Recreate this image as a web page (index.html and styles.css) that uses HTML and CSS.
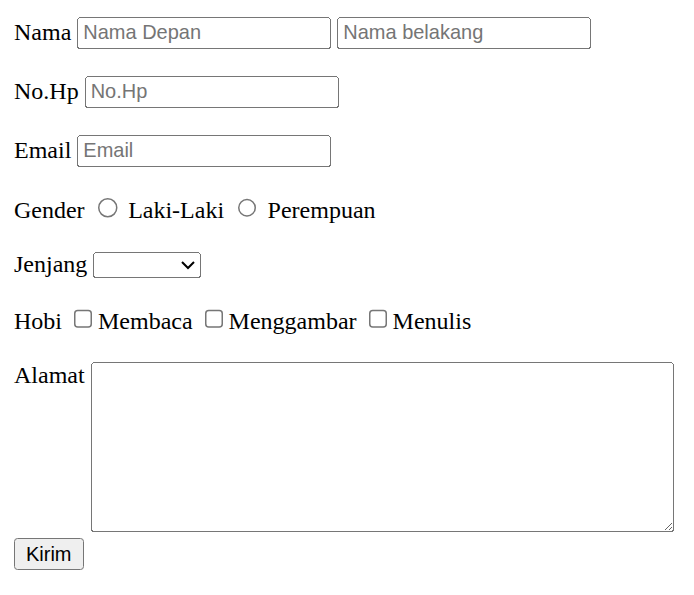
FILE: index.html
```html
<!DOCTYPE html>
<html>
<head>
<meta charset="utf-8">
<link rel="stylesheet" href="styles.css">
</head>
<body>
<form class="page">
  <div class="row">Nama <input class="field" type="text" placeholder="Nama Depan"> <input class="field" type="text" placeholder="Nama belakang"></div>
  <div class="row">No.Hp <input class="field" type="text" placeholder="No.Hp"></div>
  <div class="row">Email <input class="field" type="email" placeholder="Email"></div>
  <div class="row">Gender <input class="opt" type="radio" name="g"> Laki-Laki <input class="opt" type="radio" name="g"> Perempuan</div>
  <div class="row">Jenjang <select class="pick"><option></option><option>SD</option><option>SMP</option><option>SMA</option></select></div>
  <div class="row">Hobi <input class="opt" type="checkbox">Membaca <input class="opt" type="checkbox">Menggambar <input class="opt" type="checkbox">Menulis</div>
  <div class="row-last">Alamat <textarea class="area"></textarea></div>
  <button class="btn" type="button">Kirim</button>
</form>
</body>
</html>
```

FILE: styles.css
```css
body {
  margin: 0;
}
.page {
  zoom: 1.5;
  margin: 11.33px 8px 8px 9.33px;
  font-family: "Liberation Serif", serif;
  font-size: 16px;
  color: #000;
}
.row {
  margin-bottom: 18px;
}
.row-last {
  margin-bottom: 4px;
}
.field, .pick, .btn {
  font-family: "Liberation Sans", Arial, sans-serif;
  font-size: 13.333px;
}
.field {
  width: 169.33px;
  box-sizing: border-box;
}
.area {
  vertical-align: top;
  width: 383.67px;
  height: 108.33px;
}
.pick {
  width: 72px;
}
```
